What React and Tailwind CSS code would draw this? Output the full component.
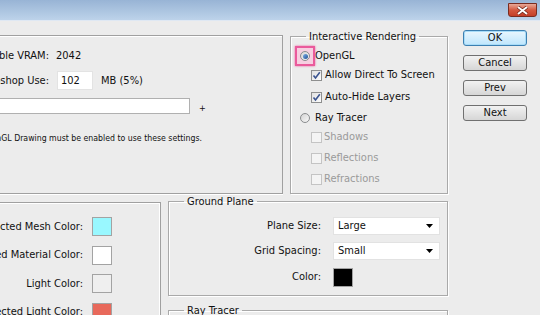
import React from 'react';

const colorRows = [
    { label: 'Selected Mesh Color:', color: 'bg-[#99f8ff]' },
    { label: 'Unselected Material Color:', color: 'bg-white' },
    { label: 'Light Color:', color: 'bg-[#efefef]' },
    { label: 'Selected Light Color:', color: 'bg-[#e8695b]' },
];

function Group({ title, className, children }) {
    return (
        <fieldset
            className={`border border-[#a9a9a9] shadow-[inset_1px_1px_0_#fff,1px_1px_0_#fff] ${className}`}
        >
            <legend className="ml-[15px] px-[3px] leading-[13px]">{title}</legend>
            {children}
        </fieldset>
    );
}

function Radio({ checked }) {
    return (
        <span className="relative flex h-[10px] w-[10px] shrink-0 items-center justify-center rounded-full border border-[#8a8c8e] bg-gradient-to-br from-[#d4d4d4] to-[#f8f8f8]">
            {checked && (
                <span className="h-[5px] w-[5px] rounded-full bg-gradient-to-br from-[#7fb0e6] to-[#1e4f95]" />
            )}
        </span>
    );
}

function Check({ checked, disabled }) {
    return (
        <span
            className={`flex h-[11px] w-[11px] shrink-0 items-center justify-center border ${
                disabled
                    ? 'border-[#c4c4c4] bg-[#f4f4f4]'
                    : 'border-[#8e8f8f] bg-gradient-to-br from-[#e2e2e2] to-[#fbfbfb]'
            }`}
        >
            {checked && (
                <svg width="9" height="9" viewBox="0 0 9 9">
                    <path d="M1.5 4.5 L3.5 7 L7.8 1.2" fill="none" stroke="#3b5490" strokeWidth="1.6" />
                </svg>
            )}
        </span>
    );
}

function Select({ value }) {
    return (
        <div className="flex h-[18px] w-[107px] items-center justify-between border border-[#e2e2e2] bg-white pl-[4px] pr-[6px]">
            <span>{value}</span>
            <svg width="7" height="4" viewBox="0 0 7 4">
                <path d="M0 0 H7 L3.5 4 Z" fill="#000" />
            </svg>
        </div>
    );
}

function Button({ children, primary }) {
    return (
        <button
            className={`h-[16px] w-[64px] rounded-[3px] border text-center leading-[14px] ${
                primary
                    ? 'border-[#3c7fb1] bg-gradient-to-b from-[#eaf6fd] to-[#bee6fd] shadow-[inset_0_0_0_1px_#a8dcf8]'
                    : 'border-[#707070] bg-gradient-to-b from-[#f2f2f2] to-[#d6d6d6]'
            }`}
        >
            {children}
        </button>
    );
}

export default function App() {
    return (
        <div className="relative h-[315px] w-[540px] overflow-hidden bg-[#ececec] font-['DejaVu_Sans_Condensed','DejaVu_Sans',sans-serif] text-[11px] leading-[14px] text-[#111]">
            {/* Title bar */}
            <div className="flex h-[20px] justify-end bg-gradient-to-b from-[#98b4d5] to-[#bdd3ea] pr-[3px] pt-[3px]">
                <div className="flex h-[14px] w-[29px] items-center justify-center rounded-b-[3px] border border-[#7a2c20] bg-gradient-to-b from-[#e7a898] via-[#d4583f] to-[#c43f28]">
                    <svg width="13" height="9" viewBox="0 0 13 9">
                        <path d="M2 1 L11 8 M11 1 L2 8" stroke="#6b2318" strokeWidth="3.4" />
                        <path d="M2 1 L11 8 M11 1 L2 8" stroke="#fff" strokeWidth="2" />
                    </svg>
                </div>
            </div>
            <div className="h-px bg-[#dfe8f3]" />

            <div className="flex">
                <div className="flex w-[448px] flex-col">
                    {/* Top row */}
                    <div className="mt-[9px] flex items-start">
                        <div className="mt-[5px] h-[159px] w-[283px] border-y border-r border-[#a0a0a0] shadow-[inset_0_1px_0_#fff,0_1px_0_#fff]">
                            <div className="mt-[13px] flex items-center">
                                <div className="flex w-[49px] justify-end">
                                    <span className="shrink-0 whitespace-nowrap">Available VRAM:</span>
                                </div>
                                <span className="ml-[7px]">2042</span>
                            </div>
                            <div className="mt-[8px] flex items-center">
                                <div className="flex w-[49px] justify-end">
                                    <span className="shrink-0 whitespace-nowrap">Photoshop Use:</span>
                                </div>
                                <div className="ml-[8px] flex h-[19px] w-[36px] items-center border border-[#e3e3e3] bg-white pl-[3px]">
                                    102
                                </div>
                                <span className="ml-[8px]">MB (5%)</span>
                            </div>
                            <div className="mt-[8px] flex items-start">
                                <div className="h-[16px] w-[190px] border-y border-r border-[#b0b0b0] bg-white" />
                                <span className="ml-[9px] mt-[6px] text-[9px] leading-[9px]">+</span>
                            </div>
                            <div className="mt-[18px] flex w-[202px] justify-end">
                                <span className="shrink-0 whitespace-nowrap text-[8.7px] leading-[12px]">
                                    Note: OpenGL Drawing must be enabled to use these settings.
                                </span>
                            </div>
                        </div>

                        <Group title="Interactive Rendering" className="ml-[7px] h-[164px] w-[158px]">
                            <div className="flex flex-col">
                                <div className="mt-[6px] flex h-[14px] items-center pl-[9px]">
                                    <span className="relative">
                                        <span className="absolute -inset-[5px] border-2 border-[#ea5a9c] bg-[#f6cfe1] shadow-[0_0_2px_#ea5a9c]" />
                                        <Radio checked />
                                    </span>
                                    <span className="ml-[5px]">OpenGL</span>
                                </div>
                                <div className="mt-[5px] flex h-[14px] items-center pl-[20px]">
                                    <Check checked />
                                    <span className="ml-[3px]">Allow Direct To Screen</span>
                                </div>
                                <div className="mt-[8px] flex h-[14px] items-center pl-[20px]">
                                    <Check checked />
                                    <span className="ml-[3px]">Auto-Hide Layers</span>
                                </div>
                                <div className="mt-[7px] flex h-[14px] items-center pl-[9px]">
                                    <Radio />
                                    <span className="ml-[5px]">Ray Tracer</span>
                                </div>
                                <div className="mt-[5px] flex h-[14px] items-center pl-[20px] text-[#9a9a9a]">
                                    <Check disabled />
                                    <span className="ml-[2px]">Shadows</span>
                                </div>
                                <div className="mt-[7px] flex h-[14px] items-center pl-[20px] text-[#9a9a9a]">
                                    <Check disabled />
                                    <span className="ml-[2px]">Reflections</span>
                                </div>
                                <div className="mt-[7px] flex h-[14px] items-center pl-[20px] text-[#9a9a9a]">
                                    <Check disabled />
                                    <span className="ml-[2px]">Refractions</span>
                                </div>
                            </div>
                        </Group>
                    </div>

                    {/* Bottom row */}
                    <div className="mt-[1px] flex items-start">
                        <div className="mt-[7px] h-[130px] w-[161px] border-t border-r border-[#a0a0a0] shadow-[inset_0_1px_0_#fff,inset_-1px_0_0_#fff]">
                            <div className="mt-[14px] flex flex-col gap-[9.5px]">
                                {colorRows.map((row) => (
                                    <div key={row.label} className="flex items-center">
                                        <div className="flex w-[83px] justify-end">
                                            <span className="shrink-0 whitespace-nowrap">{row.label}</span>
                                        </div>
                                        <span className={`ml-[9px] h-[19px] w-[20px] border border-[#a3a3a3] ${row.color}`} />
                                    </div>
                                ))}
                            </div>
                        </div>

                        <div className="ml-[7px] flex flex-col">
                            <Group title="Ground Plane" className="h-[101px] w-[280px]">
                                <div className="mt-[9px] flex flex-col gap-[7px]">
                                    <div className="flex items-center">
                                        <div className="flex w-[152px] justify-end">Plane Size:</div>
                                        <div className="ml-[12px]">
                                            <Select value="Large" />
                                        </div>
                                    </div>
                                    <div className="flex items-center">
                                        <div className="flex w-[152px] justify-end">Grid Spacing:</div>
                                        <div className="ml-[12px]">
                                            <Select value="Small" />
                                        </div>
                                    </div>
                                    <div className="flex items-center">
                                        <div className="flex w-[152px] justify-end">Color:</div>
                                        <span className="ml-[12px] mt-[1px] h-[19px] w-[20px] border border-[#a3a3a3] bg-black" />
                                    </div>
                                </div>
                            </Group>
                            <Group title="Ray Tracer" className="mt-[8px] h-[60px] w-[280px]" />
                        </div>
                    </div>
                </div>

                {/* Buttons */}
                <div className="ml-[15px] mt-[9px] flex flex-col gap-[9px]">
                    <Button primary>OK</Button>
                    <Button>Cancel</Button>
                    <Button>Prev</Button>
                    <Button>Next</Button>
                </div>
            </div>
        </div>
    );
}
